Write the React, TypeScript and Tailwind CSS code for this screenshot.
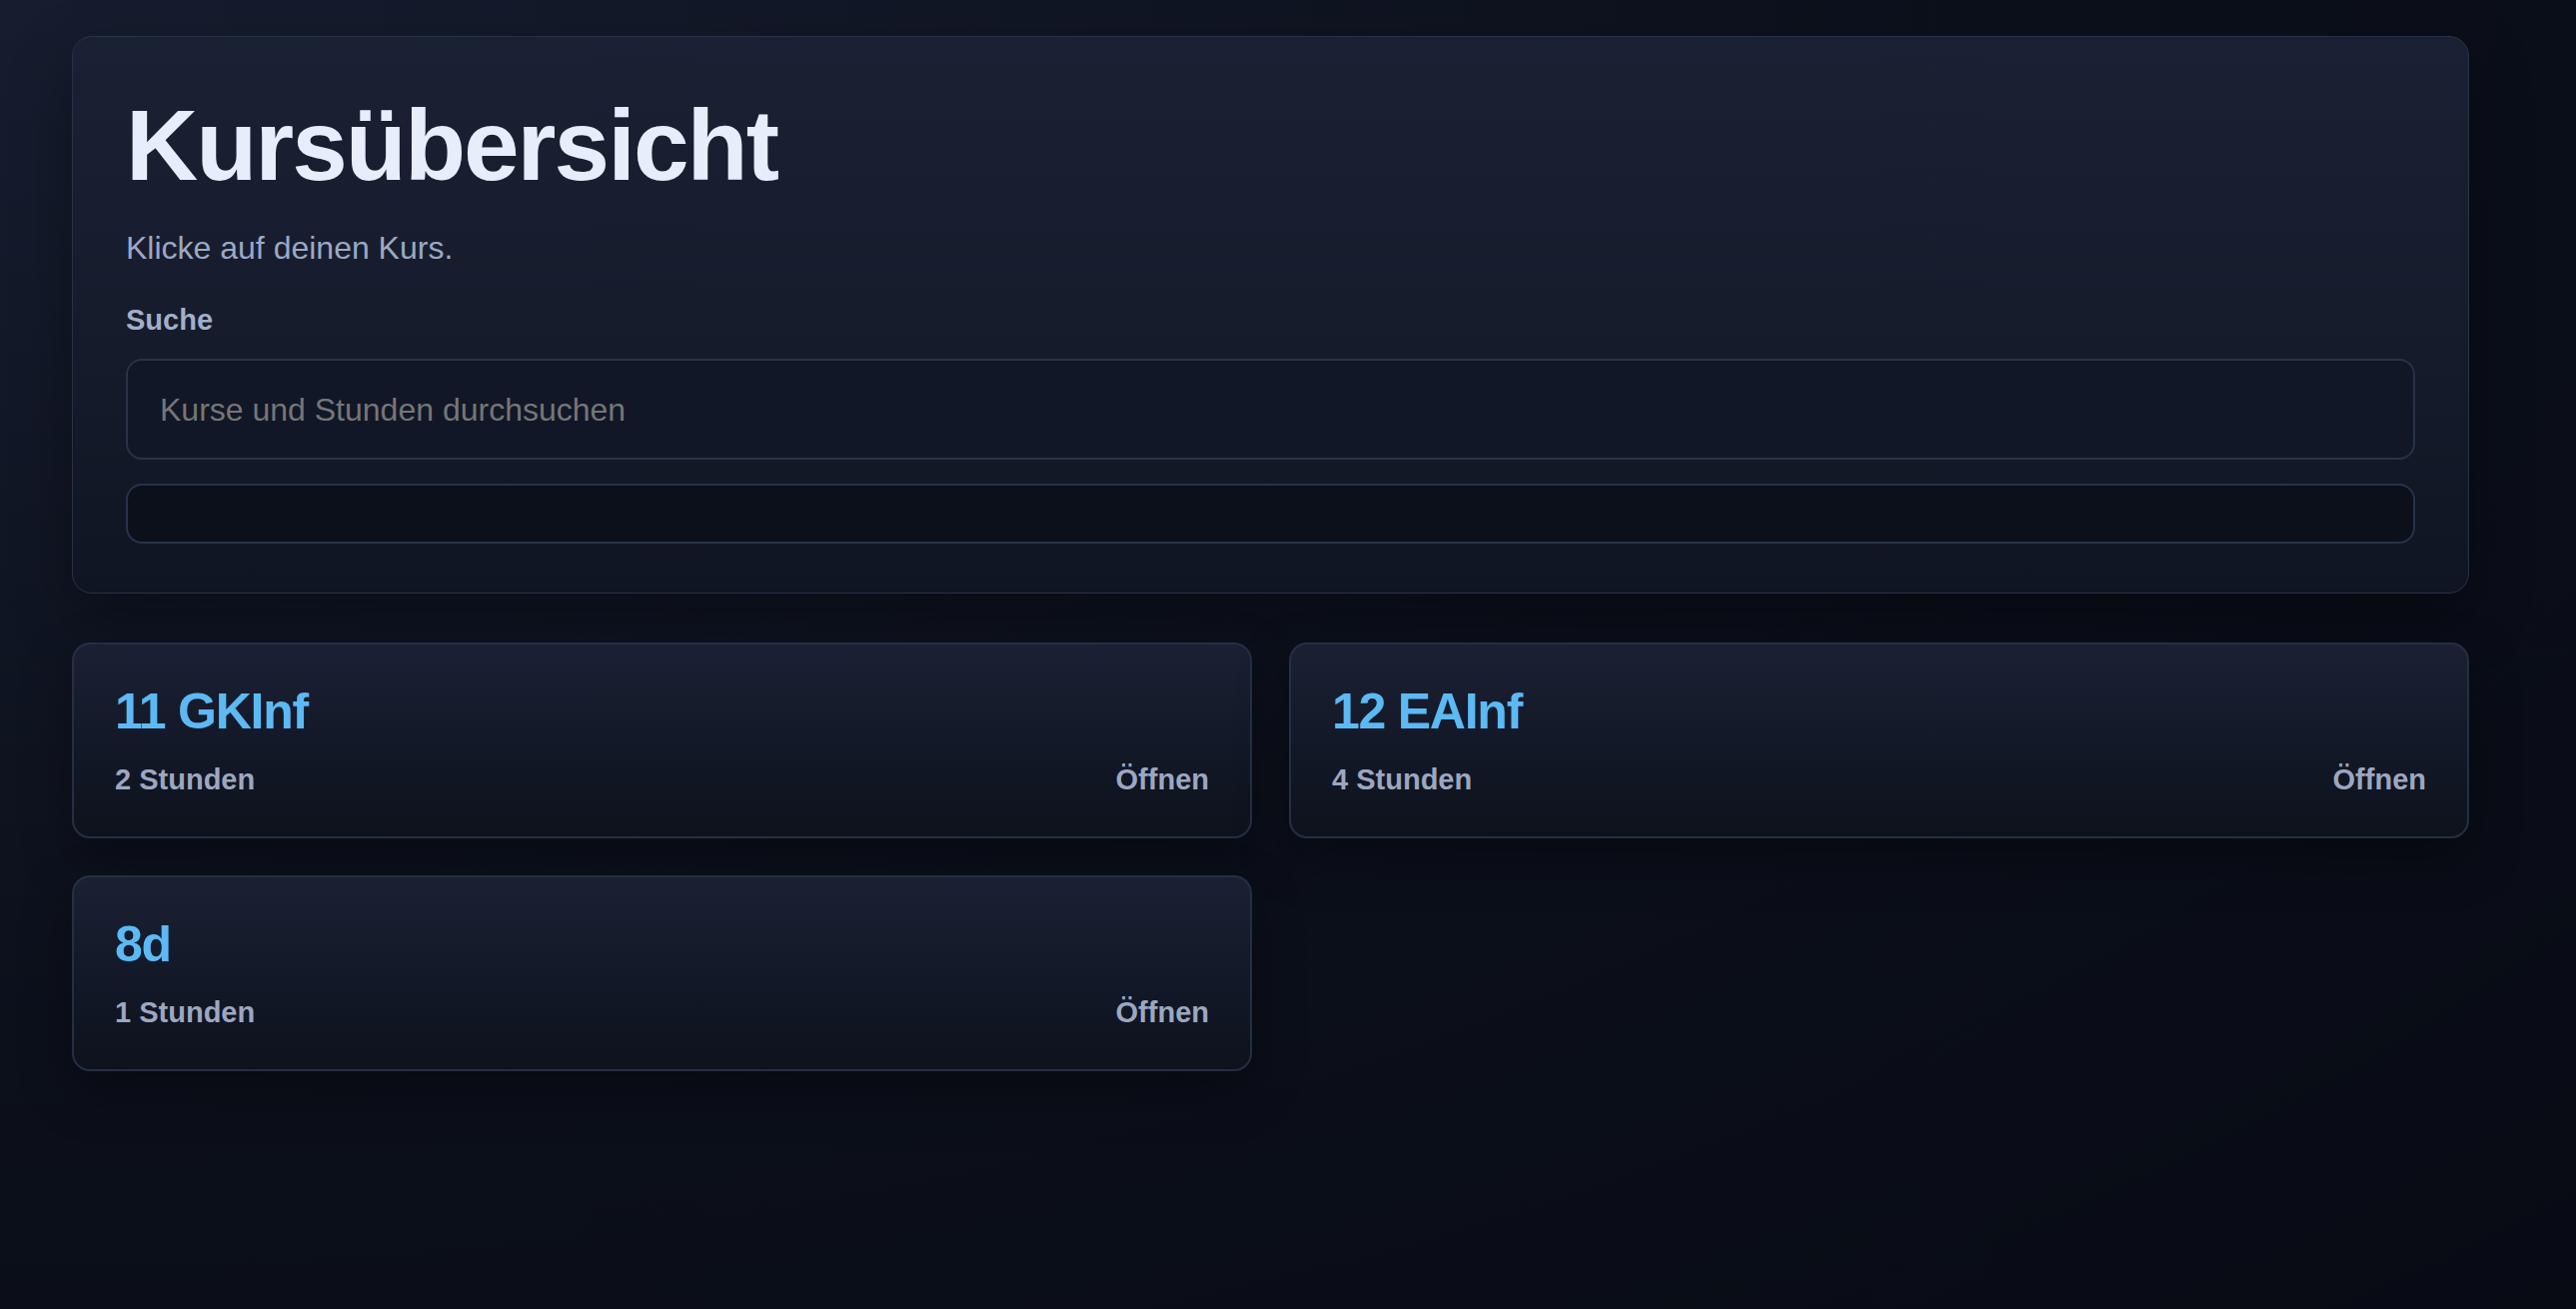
import React from "react";

const courses = [
  { name: "11 GKInf", count: 2 },
  { name: "12 EAInf", count: 4 },
  { name: "8d", count: 1 },
];

export default function App() {
  return (
    <div className="min-h-screen w-full bg-[radial-gradient(ellipse_at_top_left,#161d2f_0%,#0c101b_55%,#080b14_100%)] font-['Liberation_Sans',Arial,sans-serif]">
      <div className="ml-[72px] w-[2399px] pt-[36px] pb-[60px]">
        <section className="rounded-[20px] border border-[#283246] bg-[linear-gradient(180deg,#1b2134_0%,#161c2c_50%,#101523_100%)] px-[53px] pt-[53px] pb-[49px] shadow-[0_24px_60px_rgba(0,0,0,0.35)]">
          <h1 className="text-[100px] leading-[110px] font-bold tracking-[-0.02em] text-[#e7edfa]">
            Kursübersicht
          </h1>
          <p className="mt-[24px] text-[32px] leading-[48px] text-[#9ba9c4]">
            Klicke auf deinen Kurs.
          </p>
          <label className="mt-[27px] block text-[29px] leading-[43px] font-bold text-[#a2afca]">
            Suche
          </label>
          <div className="mt-[17px] flex h-[101px] items-center rounded-[16px] border-2 border-[#283349] bg-[#111727] px-[32px]">
            <input
              className="w-full bg-transparent text-[32px] text-[#e7edfa] outline-none placeholder:text-[#767676]"
              placeholder="Kurse und Stunden durchsuchen"
            />
          </div>
          <div className="mt-[24px] h-[60px] rounded-[16px] border-2 border-[#283349] bg-[#0c101b]" />
        </section>

        <div className="mt-[49px] grid grid-cols-2 gap-[37px]">
          {courses.map((c) => (
            <div
              key={c.name}
              className="h-[196px] rounded-[18px] border-2 border-[#252f43] bg-[linear-gradient(180deg,#1b2133_0%,#121827_55%,#0e121c_100%)] px-[41px] pt-[37px] shadow-[0_20px_50px_rgba(0,0,0,0.35)]"
            >
              <div className="text-[50px] leading-[60px] font-bold tracking-[-0.025em] text-[#5cb9f4]">
                {c.name}
              </div>
              <div className="mt-[17px] flex items-center justify-between text-[29px] leading-[43px] font-bold text-[#9ca7c0]">
                <span>{c.count} Stunden</span>
                <span>Öffnen</span>
              </div>
            </div>
          ))}
        </div>
      </div>
    </div>
  );
}
